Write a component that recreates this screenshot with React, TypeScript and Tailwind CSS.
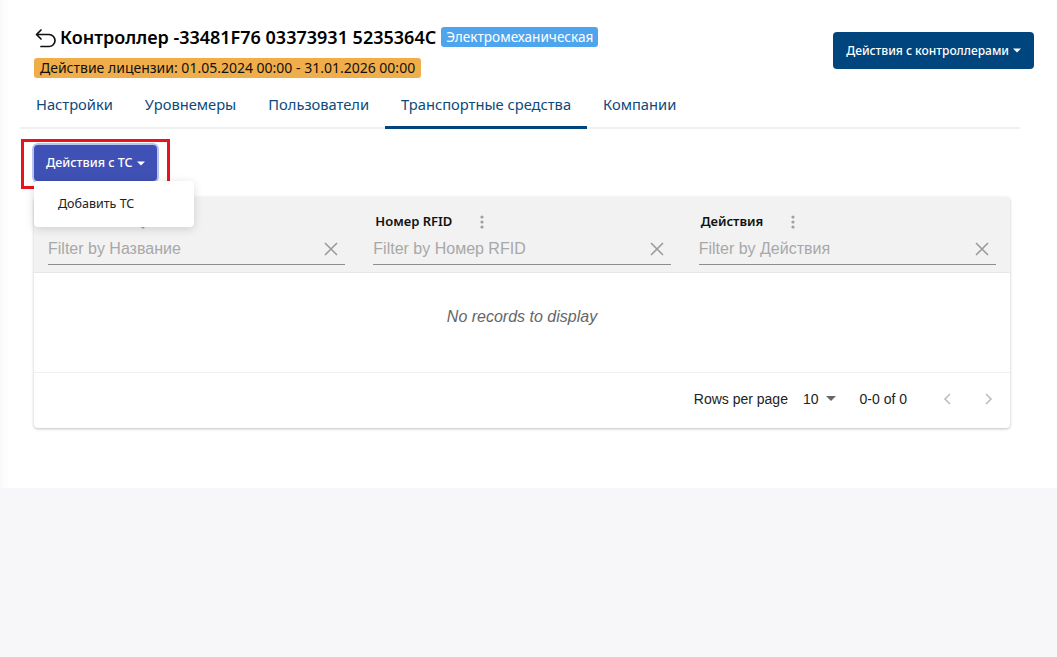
import React from 'react';

const tabs = ['Настройки', 'Уровнемеры', 'Пользователи', 'Транспортные средства', 'Компании'];
const columns = ['Название', 'Номер RFID', 'Действия'];

const Caret = () => (
  <svg width="8" height="5" viewBox="0 0 8 5" className="ml-1 inline-block">
    <path d="M0 0.5h8L4 4.5z" fill="currentColor" />
  </svg>
);

const Dots = () => (
  <svg width="4" height="16" viewBox="0 0 4 16">
    <circle cx="2" cy="3" r="1.6" fill="#a0a0a0" />
    <circle cx="2" cy="8" r="1.6" fill="#a0a0a0" />
    <circle cx="2" cy="13" r="1.6" fill="#a0a0a0" />
  </svg>
);

const Cross = () => (
  <svg width="16" height="16" viewBox="0 0 16 16">
    <path d="M2 2l12 12M14 2L2 14" stroke="#9a9a9a" strokeWidth="1.6" />
  </svg>
);

const App: React.FC = () => {
  const ui = { fontFamily: '"Noto Sans", "DejaVu Sans", sans-serif' };
  const arial = { fontFamily: '"Liberation Sans", Arial, sans-serif' };

  return (
    <div className="min-h-[657px] w-full bg-[#f7f7f9]" style={ui}>
      <div className="h-[488px] bg-white pl-[34px] pr-[23px] pt-[24px] shadow-[inset_10px_0_8px_-8px_rgba(0,0,0,0.04)]">
        {/* Header */}
        <div className="flex items-start justify-between">
          <div>
            <div className="flex items-center">
              <svg width="24" height="22" viewBox="0 0 24 22" className="mr-[2px] mt-[2px]">
                <path
                  d="M7 3L2.5 7.5 7 12M2.5 7.5H15a6 6 0 0 1 0 12H7"
                  fill="none"
                  stroke="#111"
                  strokeWidth="1.7"
                  strokeLinecap="round"
                  strokeLinejoin="round"
                />
              </svg>
              <span className="text-[18px] font-semibold leading-[26px] text-black">
                Контроллер -33481F76 03373931 5235364C
              </span>
              <span className="ml-[5px] rounded-[3px] bg-[#4ea5ee] px-[5px] text-[13.6px] leading-[20px] text-white">
                Электромеханическая
              </span>
            </div>
            <div className="mt-[8px] inline-block rounded-[3px] bg-[#f0ae4b] px-[6px] text-[14px] leading-[20px] text-[#111]">
              Действие лицензии: 01.05.2024 00:00 - 31.01.2026 00:00
            </div>
          </div>
          <button className="mt-[8px] flex h-[37px] items-center rounded-[4px] bg-[#00457e] px-[13px] text-[12px] font-medium text-white">
            Действия с контроллерами
            <Caret />
          </button>
        </div>

        {/* Tabs */}
        <div className="ml-[-14px] mr-[14px] mt-[10px] flex border-b-2 border-[#f1f1f1]">
          {tabs.map((t, i) => (
            <div
              key={t}
              className={`px-[16px] pb-[11px] pt-[4px] text-[14.7px] leading-[22px] text-[#0b4a7a] ${
                i === 3 ? 'border-b-[3px] border-[#00457e] -mb-[2px] pb-[10px]' : ''
              }`}
            >
              {t}
            </div>
          ))}
        </div>

        {/* Actions */}
        <div className="relative ml-[-13px] mt-[10px] inline-block border-[3px] border-[#e8131f] px-[10px] pb-[5px] pt-[3px]">
          <button className="flex h-[36px] items-center rounded-[4px] bg-[#3f51b5] px-[12px] text-[12.5px] font-medium text-white ring-[2px] ring-[#b8c4f0]">
            Действия с ТС
            <Caret />
          </button>
          <div className="absolute left-[10px] top-[39px] z-10 w-[160px] rounded-[4px] bg-white py-[13px] pl-[24px] text-[12.5px] leading-[20px] text-[#222] shadow-[0_2px_10px_rgba(0,0,0,0.15)]">
            Добавить ТС
          </div>
        </div>

        {/* Table */}
        <div
          className="mt-[8px] w-[976px] rounded-[4px] bg-white shadow-[0_1px_3px_rgba(0,0,0,0.25)]"
          style={arial}
        >
          <div className="grid grid-cols-3 gap-[28px] rounded-t-[4px] bg-[#f2f2f2] px-[14px] pb-[7px] pt-[14px]">
            {columns.map((c) => (
              <div key={c}>
                <div className="flex h-[22px] items-center gap-[28px] pl-[2px]" style={ui}>
                  <span className="text-[13px] font-semibold text-[#111]">{c}</span>
                  <Dots />
                </div>
                <div className="mt-[5px] flex items-center justify-between border-b border-[#8e8e8e] pb-[4px]">
                  <span className="text-[16px] leading-[22px] text-[#a8a8a8]">Filter by {c}</span>
                  <span className="mr-[6px]">
                    <Cross />
                  </span>
                </div>
              </div>
            ))}
          </div>
          <div className="border-t border-[#e6e6e6]" />
          <div className="flex h-[100px] items-start justify-center border-b border-[#f0f0f0] pt-[33px] text-[16px] leading-[22px] italic text-[#666]">
            No records to display
          </div>
          <div className="flex h-[55px] items-center justify-end pb-[3px] pr-[16px] text-[14px] text-[#222]">
            <span>Rows per page</span>
            <span className="ml-[15px] flex items-center">
              10
              <svg width="10" height="6" viewBox="0 0 10 6" className="ml-[7px]">
                <path d="M0 0h10L5 5z" fill="#666" />
              </svg>
            </span>
            <span className="ml-[24px]">0-0 of 0</span>
            <svg width="12" height="14" viewBox="0 0 12 14" className="ml-[35px]">
              <path d="M8 2L3 7l5 5" fill="none" stroke="#bdbdbd" strokeWidth="1.6" />
            </svg>
            <svg width="12" height="14" viewBox="0 0 12 14" className="ml-[28px]">
              <path d="M4 2l5 5-5 5" fill="none" stroke="#bdbdbd" strokeWidth="1.6" />
            </svg>
          </div>
        </div>
      </div>
    </div>
  );
};

export default App;
